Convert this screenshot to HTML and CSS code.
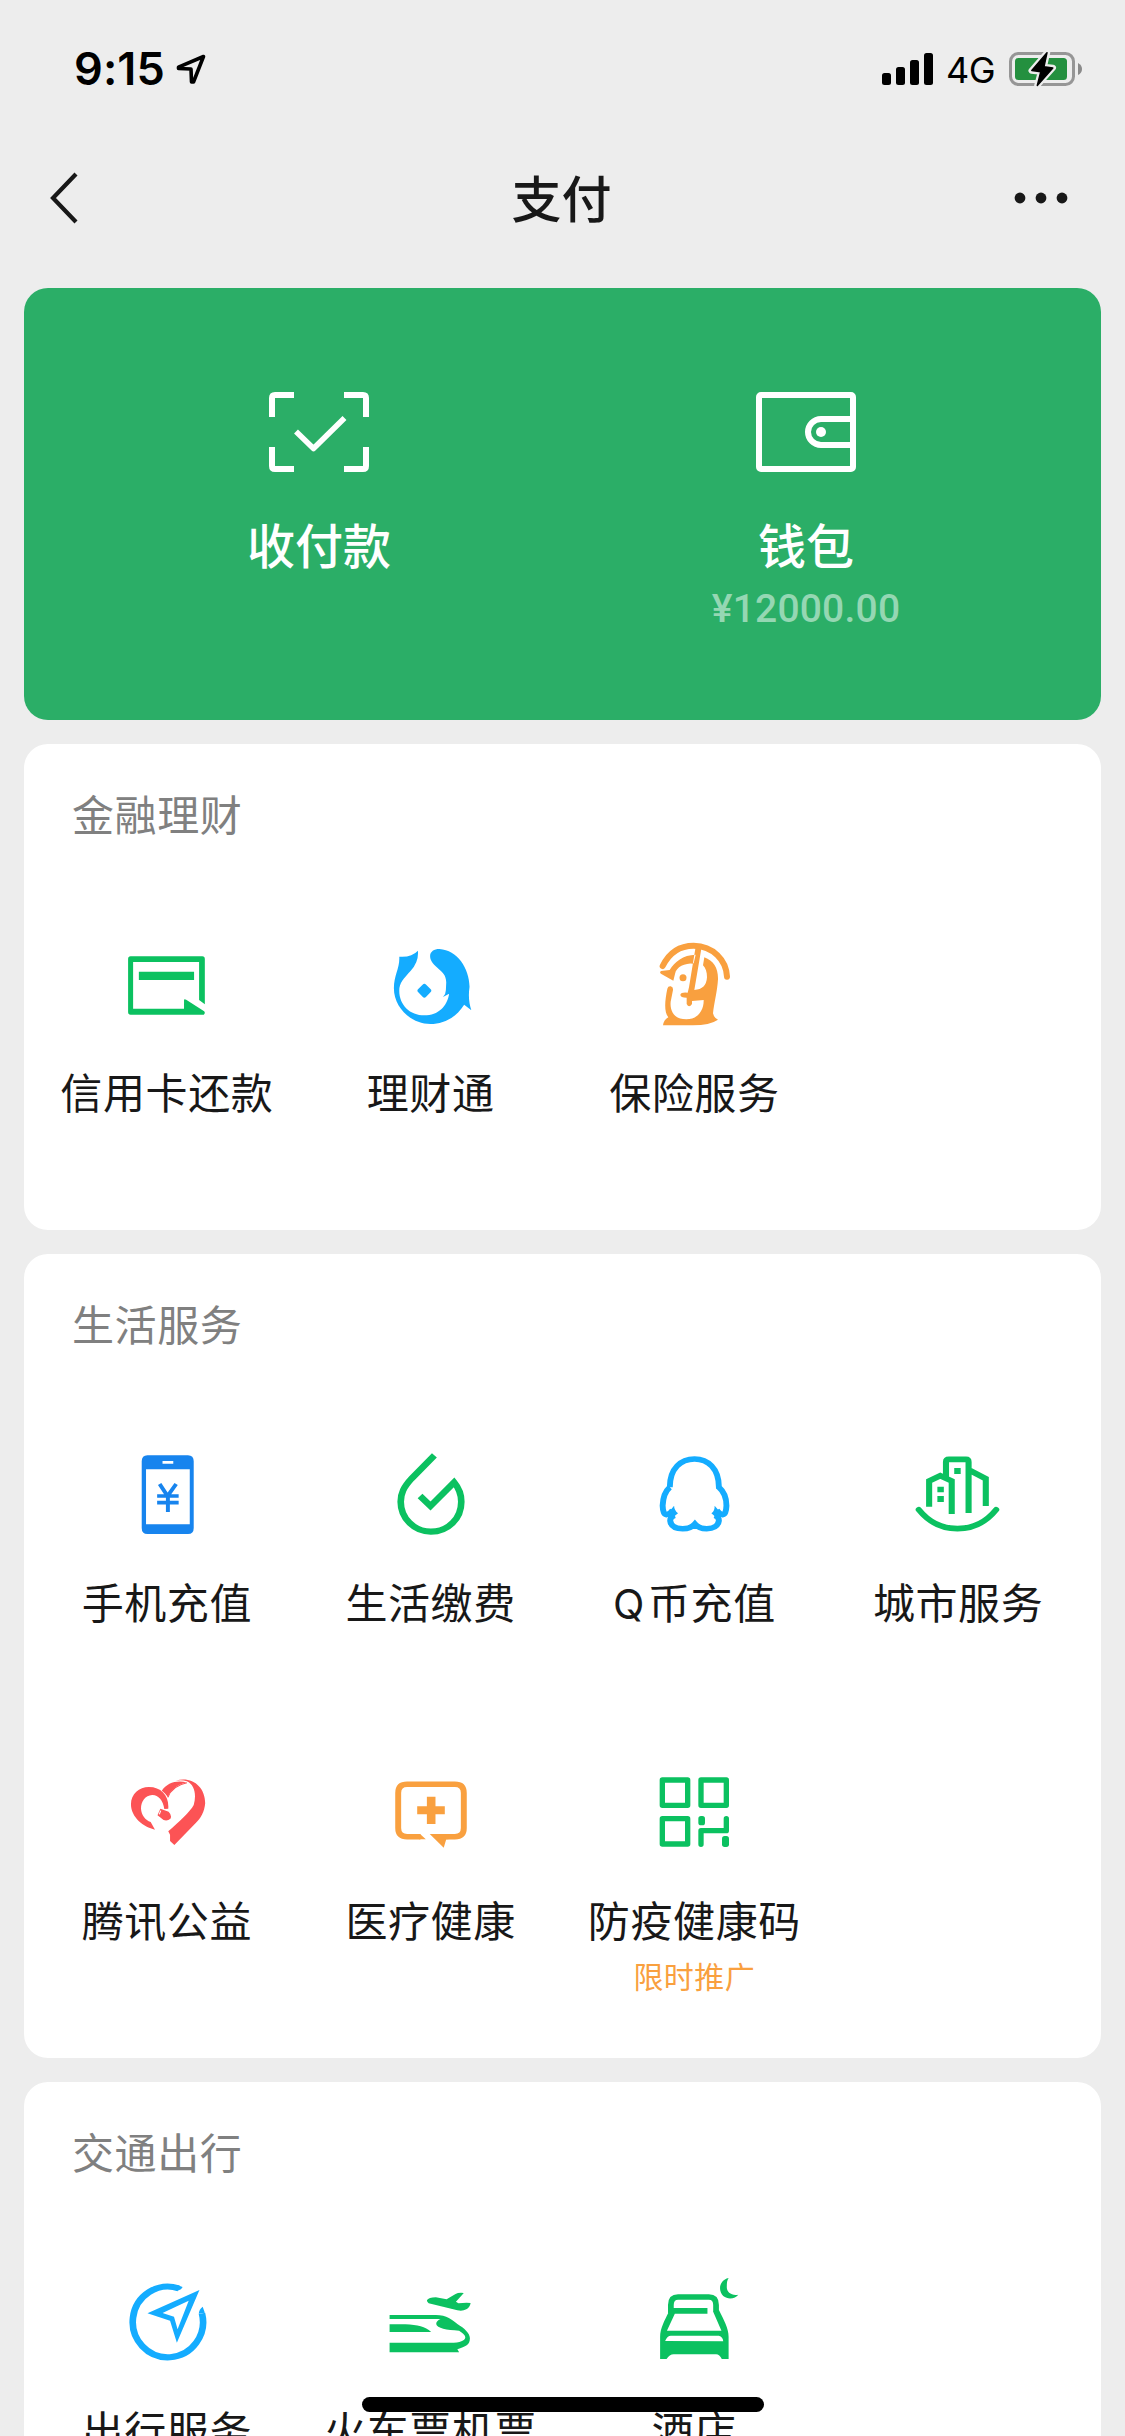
FILE: index.html
```html
<!DOCTYPE html>
<html lang="zh-CN">
<head>
<meta charset="utf-8">
<title>支付</title>
<link rel="stylesheet" href="styles.css">
</head>
<body>
<div class="screen">
  <header class="status">
    <div class="status-left">
      <span class="time">9:15</span>
      <svg class="locate" viewBox="0 0 30 30"><path d="M27.5 2.5 17.5 28 15.5 28 15 15 2.5 14.5 2.5 13.2Z" fill="none" stroke="#000" stroke-width="3.6" stroke-linejoin="round"/></svg>
    </div>
    <div class="status-right">
      <svg class="signal" viewBox="0 0 51 32"><rect y="20" width="9" height="12" rx="2.5"/><rect x="14" y="14" width="9" height="18" rx="2.5"/><rect x="28" y="7" width="9" height="25" rx="2.5"/><rect x="42" width="9" height="32" rx="2.5"/></svg>
      <span class="net">4G</span>
      <svg class="battery" viewBox="1009 51 74 37">
        <rect x="1010.5" y="53.5" width="63" height="31" rx="8" fill="none" stroke="#969696" stroke-width="3"/>
        <path d="M1078 63Q1082 65 1082 69T1078 75Z" fill="#8a8a8a"/>
        <rect x="1015" y="58" width="52" height="22" rx="3.5" fill="#24903f"/>
        <path d="M1047.2 52.5 1031.5 70.7 1040.8 71.7 1037.2 85.5 1053 67.7 1044 66.7Z" fill="#000" stroke="#ededed" stroke-width="6" stroke-linejoin="round"/>
        <path d="M1047 52.7 1031.8 70.4 1040.8 71.7 1037.3 85.5 1052.8 68 1044 66.7Z" stroke="#000" stroke-width="1.5" stroke-linejoin="round"/>
      </svg>
    </div>
  </header>
  <nav class="nav">
    <svg class="back" viewBox="0 0 28 52"><path d="M26 2 3 26 26 50" fill="none" stroke="#181818" stroke-width="4.2"/></svg>
    <h1 class="title">支付</h1>
    <svg class="more" viewBox="0 0 54 12"><circle cx="6" cy="6" r="5.4"/><circle cx="27" cy="6" r="5.4"/><circle cx="48" cy="6" r="5.4"/></svg>
  </nav>

  <main class="cards">
    <section class="hero">
      <a class="hero-item">
        <svg class="hero-icon" viewBox="0 0 100 80" fill="none" stroke="#fff" stroke-width="6"><path d="M25 3H6Q3 3 3 6V25M75 3H94Q97 3 97 6V25M3 55V74Q3 77 6 77H25M97 55V74Q97 77 94 77H75"/><path d="M27 39.5 44.5 56.5 75.5 26" stroke-width="5.6" stroke-linejoin="round"/></svg>
        <span class="hero-label">收付款</span>
      </a>
      <a class="hero-item">
        <svg class="hero-icon" viewBox="0 0 100 80" fill="none" stroke="#fff" stroke-width="6"><rect x="3" y="3" width="94" height="74" rx="2"/><path d="M97 27H65A13 13 0 0 0 65 53H97"/><circle cx="65" cy="40" r="5" fill="#fff" stroke="none"/></svg>
        <span class="hero-label">钱包</span>
        <span class="hero-amount">¥12000.00</span>
      </a>
    </section>

    <section class="card">
      <h2 class="card-title">金融理财</h2>
      <div class="grid">
        <a class="item">
          <svg class="icon green" viewBox="340 657 251 270" preserveAspectRatio="none"><path d="M364 709H564Q571 709 571 717V853L555 840V726H371V866H513V841Q513 835 519 839L568 873Q574 878 568 884H364Q357 884 357 876V717Q357 709 364 709ZM387 755H541V780H387Z"/></svg>
          <span class="label">信用卡还款</span>
        </a>
        <a class="item">
          <svg class="icon sky" viewBox="1076 657 251 270" preserveAspectRatio="none"><path d="M1113 710Q1147 713 1165 692Q1168 725 1145 752C1125 776 1113 788 1113 812C1113 855 1143 886 1183 886C1222 886 1247 858 1252 821L1235 831Q1243 822 1243 810L1244 787C1243 765 1235 758 1220 744C1205 730 1199 720 1199 708C1199 695 1210 687 1225 687C1275 690 1308 745 1309 800C1305 830 1308 850 1314 871L1294 854C1270 895 1235 912 1200 912C1145 912 1098 862 1098 805C1098 765 1115 745 1113 710ZM1178 794Q1183 788 1188 794L1200 807Q1205 812 1200 817L1188 830Q1183 836 1178 830L1166 817Q1161 812 1166 807Z"/></svg>
          <span class="label">理财通</span>
        </a>
        <a class="item">
          <svg class="icon orange" viewBox="268 117 270 270"><path d="M309 198C330 155 365 137 402 137C460 138 500 180 502 230" fill="none" stroke="currentColor" stroke-width="18" stroke-linecap="round"/><path d="M304 213Q298 218 305 222L341 242L346 222C350 200 375 190 402 190L408 164C370 165 345 185 330 210ZM323 266Q325 258 333 259Q341 261 340 270L333 305C330 335 345 358 380 358C415 358 433 330 432 300L397 303V312Q388 326 381 312V293Q362 293 362 284Q364 276 384 278L388 262L408 140H426L404 270Q440 268 442 232C442 215 438 205 430 196L434 172C462 182 476 205 475 238C473 275 463 310 460 340Q463 354 475 359Q450 376 400 376H310Q312 360 326 352C312 335 316 300 323 266Z"/><circle cx="370" cy="233" r="10.5"/></svg>
          <span class="label">保险服务</span>
        </a>
      </div>
    </section>

    <section class="card">
      <h2 class="card-title">生活服务</h2>
      <div class="grid">
        <a class="item">
          <svg class="icon blue" viewBox="340 147 251 270" preserveAspectRatio="none"><path fill-rule="evenodd" d="M411 166H524Q540 166 540 184V384Q540 402 524 402H411Q395 402 395 384V184Q395 166 411 166ZM407 208V373H529V208ZM453 183V191H483V183Z"/><path d="M445 252 467 288 491 252M438 288H498M438 308H498M468 286V336" fill="none" stroke="currentColor" stroke-width="11"/></svg>
          <span class="label">手机充值</span>
        </a>
        <a class="item">
          <svg class="icon green" viewBox="1076 147 251 270" preserveAspectRatio="none"><path d="M1211 166 1148 235C1125 262 1117 280 1117 305C1117 355 1155 395 1201 395C1250 395 1286 355 1286 305C1286 285 1280 265 1266 247L1200 318L1171 288" fill="none" stroke="currentColor" stroke-width="18.5"/></svg>
          <span class="label">生活缴费</span>
        </a>
        <a class="item">
          <svg class="icon sky" viewBox="241 147 251 270" preserveAspectRatio="none"><path d="M299 262C299 205 330 177 368 177C405 177 436 205 436 262C450 275 457 295 457 317Q456 345 446 344Q437 342 430 331M299 262C285 275 280 295 279 317Q280 345 290 344Q300 342 307 331M313 346Q300 350 300 362C302 380 318 386 335 386C352 386 363 380 369 372C375 380 388 386 402 386C420 386 434 378 436 362Q436 350 424 346" fill="none" stroke="currentColor" stroke-width="16.5"/><path d="M311 317Q311 330 322 340L310 350 292 342ZM424 317Q425 332 415 340L426 350 444 342Z"/></svg>
          <span class="label"><span class="latin">Q</span>币充值</span>
        </a>
        <a class="item">
          <svg class="icon green" viewBox="977 147 251 270" preserveAspectRatio="none"><path d="M993 329C1020 365 1055 386 1101 386C1147 386 1182 365 1209 329" fill="none" stroke="currentColor" stroke-width="17" stroke-linecap="round"/><path d="M1022 320V243L1053 227 1085 243V342M1069 234V186Q1069 178 1077 178H1125Q1132 178 1132 186V339M1132 209 1180 236V318" fill="none" stroke="currentColor" stroke-width="17"/><path d="M1092 204h18v18h-18zM1045 260h18v17h-18zM1045 288h18v18h-18z"/></svg>
          <span class="label">城市服务</span>
        </a>
        <a class="item">
          <svg class="icon red" viewBox="340 81 251 270" preserveAspectRatio="none"><path d="M432 269C400 262 365 232 365 193C365 162 388 141 415 141C450 141 472 168 469 206L458 207C455 180 440 164 424 165C405 166 393 185 393 206C394 225 405 240 420 246ZM451 152C465 130 490 120 520 127C495 133 475 150 468 172C463 163 457 157 451 152ZM490 122C535 108 572 140 572 190C570 215 560 235 545 250L486 315L474 303V284L469 274C500 245 530 215 540 195C548 165 543 135 521 124Q508 119 490 122ZM447 206L470 215Q480 226 475 236Q467 244 456 240L439 226Z"/><path d="M448 212 444 223" stroke="#fff" stroke-width="3"/><path d="M521 128C495 134 475 150 468 172" stroke="currentColor" stroke-width="3" fill="none"/></svg>
          <span class="label">腾讯公益</span>
        </a>
        <a class="item">
          <svg class="icon orange" viewBox="1076 81 251 270" preserveAspectRatio="none"><path d="M1172 290H1135Q1110 290 1110 264V159Q1110 133 1135 133H1268Q1293 133 1293 159V264Q1293 290 1268 290H1236" fill="none" stroke="currentColor" stroke-width="16.5"/><path d="M1168 282H1171L1187 298H1168ZM1198 282H1250V298H1244L1237 323ZM1190 170H1214V199H1240V223H1214V252H1190V223H1163V199H1190Z"/></svg>
          <span class="label">医疗健康</span>
        </a>
        <a class="item">
          <svg class="icon green" viewBox="268 81 270 270"><path fill="none" stroke="currentColor" stroke-width="16" stroke-linejoin="round" d="M308 120h76v76h-76zM424 120h76v76h-76zM308 236h76v76h-76z"/><path d="M424 313V272H500V236" fill="none" stroke="currentColor" stroke-width="16" stroke-linecap="round" stroke-linejoin="round"/><rect x="416" y="228" width="20" height="28" rx="8"/><rect x="487" y="288" width="21" height="33" rx="8"/></svg>
          <span class="label">防疫健康码</span>
          <span class="promo">限时推广</span>
        </a>
      </div>
    </section>

    <section class="card">
      <h2 class="card-title">交通出行</h2>
      <div class="grid">
        <a class="item">
          <svg class="icon sky" viewBox="340 531 251 270" preserveAspectRatio="none"><path d="M498 565A98 106 0 1 0 563 640" fill="none" stroke="currentColor" stroke-width="18.5"/><path fill-rule="evenodd" d="M494 555 509 561Q507 568 494 573ZM554 641Q555 628 565 620L571 638ZM556 570 493 728 474 662 411 640ZM526 602 453 639 485 650 495 688Z"/></svg>
          <span class="label">出行服务</span>
        </a>
        <a class="item">
          <svg class="icon green" viewBox="1076 531 251 270" preserveAspectRatio="none"><path d="M1086 645H1215C1245 645 1262 660 1275 672C1295 685 1310 700 1310 715C1310 735 1298 740 1275 748L1280 757H1086V728H1265C1290 727 1298 718 1297 711C1296 703 1288 698 1280 692C1245 690 1218 685 1216 672C1216 665 1222 660 1228 657H1086ZM1086 673H1130C1165 675 1185 680 1202 696H1086ZM1190 601Q1195 592 1215 592L1245 598L1270 582Q1278 577 1293 579L1271 605L1278 610L1290 609Q1300 607 1312 609Q1310 622 1300 628Q1290 634 1275 631L1195 610Q1190 606 1190 601Z"/></svg>
          <span class="label">火车票机票</span>
        </a>
        <a class="item">
          <svg class="icon green" viewBox="241 711 251 270" preserveAspectRatio="none"><path d="M302 820V795Q302 771 322 771H408Q428 771 428 795V816" fill="none" stroke="currentColor" stroke-width="16"/><path fill-rule="evenodd" d="M463 714C438 720 432 750 448 768C462 780 482 776 490 764C470 768 457 755 458 740C458 728 459 720 463 714ZM295 818C285 840 272 865 272 890V957H290Q298 943 310 943H428Q438 943 444 957H463V890C463 865 450 840 436 810L420 815 443 872H291L313 821H404V804H302ZM286 903Q292 887 302 887H436Q447 890 448 904Z"/></svg>
          <span class="label">酒店</span>
        </a>
      </div>
    </section>
  </main>
  <div class="home-bar"></div>
</div>
</body>
</html>
```
FILE: styles.css
```css
* { box-sizing: border-box; }

body {
  margin: 0;
  background: #ededed;
  color: #181818;
  font-family: "Noto Sans CJK SC", sans-serif;
}

.screen {
  position: relative;
  width: 1125px;
  height: 2436px;
  overflow: hidden;
}

svg { display: block; flex: none; }

.status {
  display: flex;
  justify-content: space-between;
  align-items: center;
  height: 132px;
  padding: 6px 42px 0 74px;
  color: #000;
  font-family: Inter, sans-serif;
}

.status-left, .status-right { display: flex; align-items: center; }
.time { font-size: 45px; font-weight: 600; line-height: 60px; width: 102px; letter-spacing: 0.1px; }
.locate { width: 30px; height: 30px; }
.signal { width: 51px; height: 32px; }
.net { font-size: 36px; line-height: 50px; width: 63px; margin-left: 13px; margin-top: 2px; letter-spacing: -0.6px; }
.battery { width: 74px; height: 37px; }

.nav {
  display: flex;
  justify-content: space-between;
  align-items: center;
  height: 132px;
  padding: 0 57px 0 50px;
}

.back { width: 28px; height: 52px; margin-right: 26px; }
.title {
  margin: 0;
  padding: 0 0 5px 5px;
  font-size: 50px;
  font-weight: 500;
  line-height: 70px;
}
.more { width: 54px; height: 12px; fill: #181818; }

.cards {
  display: flex;
  flex-direction: column;
  gap: 24px;
  padding: 24px 24px 0;
}

.hero {
  display: grid;
  grid-template-columns: 487px 487px;
  justify-content: center;
  height: 432px;
  border-radius: 24px;
  background: #2bae67;
  color: #fff;
}

.hero-item {
  display: flex;
  flex-direction: column;
  align-items: center;
  padding-top: 104px;
}

.hero-icon { width: 100px; height: 80px; }
.hero-label { margin-top: 37px; font-size: 48px; font-weight: 500; line-height: 68px; }
.hero-amount {
  margin-top: 4px;
  font-family: Roboto, sans-serif;
  font-size: 39px;
  font-weight: 500;
  line-height: 56px;
  letter-spacing: 0.2px;
  color: #95d7b3;
}

.card {
  height: auto;
  padding-bottom: 26px;
  border-radius: 24px;
  background: #fff;
}

.card-title {
  margin: 0;
  padding: 0 0 4px 48px;
  font-size: 42px;
  font-weight: 400;
  line-height: 138px;
  letter-spacing: 0.6px;
  color: #808080;
}

.grid {
  display: grid;
  grid-template-columns: repeat(4, 263.75px);
  grid-auto-rows: 318px;
  justify-content: center;
}

.item {
  display: flex;
  flex-direction: column;
  align-items: center;
  padding-top: 53px;
}

.icon { width: 90px; height: 90px; fill: currentColor; }
.green { color: #0bc160; }
.sky { color: #14acff; }
.blue { color: #1784ee; }
.orange { color: #f9a03f; }
.red { color: #fc5355; }

.label {
  margin-top: 32px;
  font-size: 42px;
  line-height: 60px;
  letter-spacing: 0.6px;
  white-space: nowrap;
}

.latin { margin-right: 3px; font-family: Inter, sans-serif; font-size: 41px; line-height: 1; }

.promo {
  margin-top: 6px;
  font-size: 30px;
  line-height: 40px;
  letter-spacing: 0.5px;
  color: #f9a03f;
}

.home-bar {
  position: absolute;
  left: 362px;
  top: 2397px;
  width: 402px;
  height: 15px;
  border-radius: 8px;
  background: #000;
}
```
